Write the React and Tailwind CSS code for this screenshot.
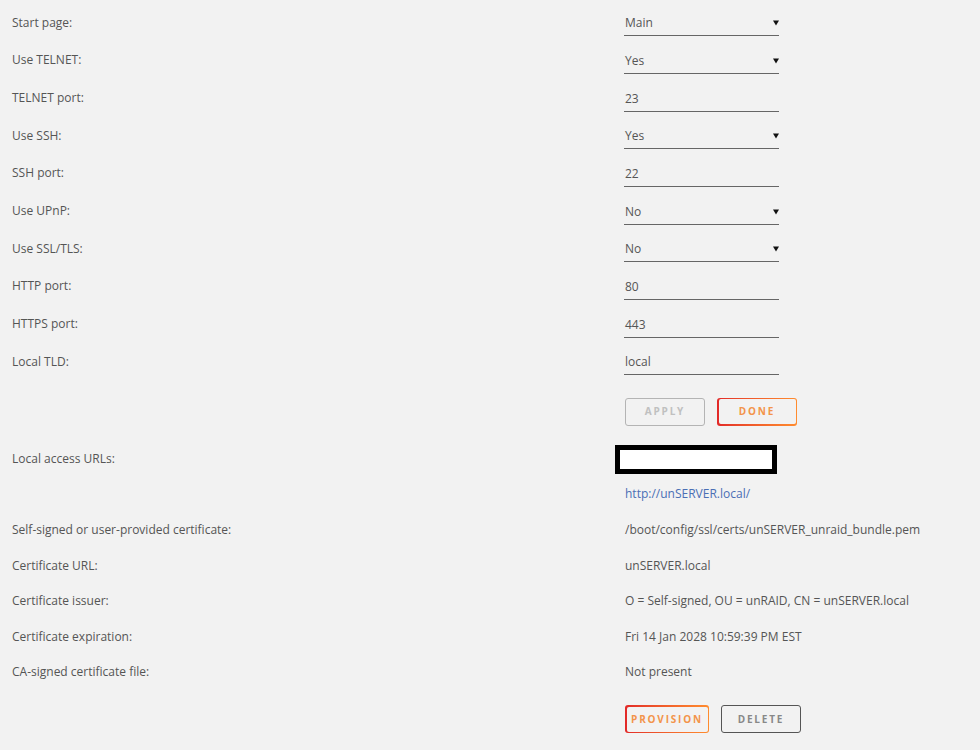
const fields = [
    { label: 'Start page:', value: 'Main', select: true },
    { label: 'Use TELNET:', value: 'Yes', select: true },
    { label: 'TELNET port:', value: '23' },
    { label: 'Use SSH:', value: 'Yes', select: true },
    { label: 'SSH port:', value: '22' },
    { label: 'Use UPnP:', value: 'No', select: true },
    { label: 'Use SSL/TLS:', value: 'No', select: true },
    { label: 'HTTP port:', value: '80' },
    { label: 'HTTPS port:', value: '443' },
    { label: 'Local TLD:', value: 'local' },
];

const certInfo = [
    { label: 'Self-signed or user-provided certificate:', value: '/boot/config/ssl/certs/unSERVER_unraid_bundle.pem' },
    { label: 'Certificate URL:', value: 'unSERVER.local' },
    { label: 'Certificate issuer:', value: 'O = Self-signed, OU = unRAID, CN = unSERVER.local' },
    { label: 'Certificate expiration:', value: 'Fri 14 Jan 2028 10:59:39 PM EST' },
    { label: 'CA-signed certificate file:', value: 'Not present' },
];

const Caret = () => (
    <svg width="6" height="6" viewBox="0 0 6 6">
        <path d="M0 0.5 L6 0.5 L3 5.5 Z" fill="#111" />
    </svg>
);

const FieldRow = ({ label, value, select }) => (
    <div className="flex items-center h-[37.67px]">
        <div className="w-[624px] pl-3 text-[#555]">{label}</div>
        <div className="w-[155px] h-[26px] flex items-center justify-between border-b-[1.5px] border-[#666] mt-[1px] pt-[1px] pl-px text-[#555]">
            <span>{value}</span>
            {select && <Caret />}
        </div>
    </div>
);

const InfoRow = ({ label, value }) => (
    <div className="flex items-center h-[35.5px]">
        <div className="w-[624px] pl-3 text-[#555]">{label}</div>
        <div className="pl-px text-[#555]">{value}</div>
    </div>
);

const GradientButton = ({ children, width }) => (
    <div className={`rounded-[3px] bg-gradient-to-r from-[#e22828] to-[#ff8c2f] p-[1.5px] ${width}`}>
        <div className="h-[25px] rounded-[2px] bg-[#f2f2f2] flex items-center justify-center text-[10px] font-bold tracking-[0.18em] text-[#f3944a]">
            {children}
        </div>
    </div>
);

const PlainButton = ({ children, width, dark }) => (
    <div className={`h-[28px] rounded-[3px] border-[1.5px] flex items-center justify-center text-[10px] font-bold tracking-[0.18em] ${width} ${dark ? 'border-[#555] text-[#888]' : 'border-[#b4b4b4] text-[#c0c0c0]'}`}>
        {children}
    </div>
);

export default function App() {
    return (
        <div className="w-[980px] h-[750px] bg-[#f2f2f2] overflow-hidden text-[12px]" style={{ fontFamily: '"Open Sans", "Noto Sans", sans-serif' }}>
            <div className="pt-[4px]">
                {fields.map((f) => (
                    <FieldRow key={f.label} {...f} />
                ))}
            </div>

            {/* apply / done */}
            <div className="flex mt-[17px] pl-[625px] gap-3">
                <PlainButton width="w-[80px]">APPLY</PlainButton>
                <GradientButton width="w-[80px]">DONE</GradientButton>
            </div>

            {/* local access urls */}
            <div className="flex items-center mt-[19px] h-[29px]">
                <div className="w-[615px] pl-3 text-[#555]">Local access URLs:</div>
                <div className="w-[162px] h-[29px] border-[5px] border-black bg-white" />
            </div>
            <div className="pl-[625px] mt-[6px] h-[28px] flex items-center text-[#4a6fb5]">http://unSERVER.local/</div>

            <div className="mt-[5px]">
                {certInfo.map((c) => (
                    <InfoRow key={c.label} {...c} />
                ))}
            </div>

            {/* provision / delete */}
            <div className="flex mt-[15px] pl-[625px] gap-3">
                <GradientButton width="w-[84px]">PROVISION</GradientButton>
                <PlainButton width="w-[80px]" dark>DELETE</PlainButton>
            </div>
        </div>
    );
}
